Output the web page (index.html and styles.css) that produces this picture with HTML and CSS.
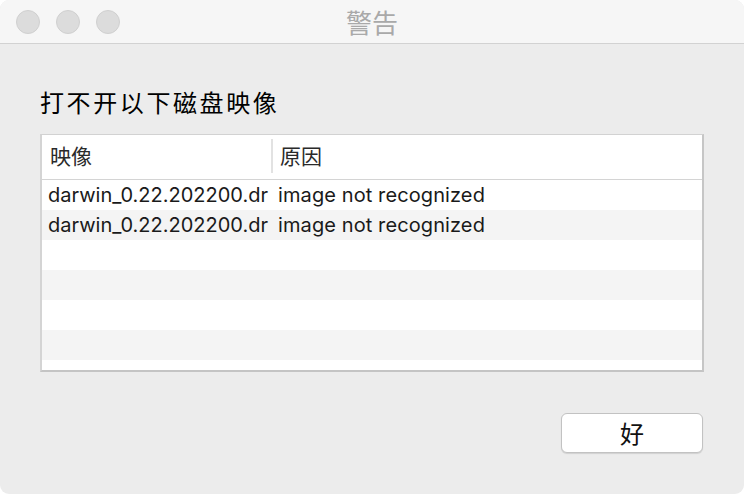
FILE: index.html
```html
<!DOCTYPE html>
<html lang="zh">
<head>
<meta charset="utf-8">
<link rel="stylesheet" href="styles.css">
</head>
<body>
<div class="window">
  <div class="titlebar">
    <div class="lights">
      <span class="light"></span><span class="light"></span><span class="light"></span>
    </div>
    <div class="title">警告</div>
  </div>
  <div class="content">
    <h1 class="heading">打不开以下磁盘映像</h1>
    <div class="table">
      <div class="thead">
        <div class="th col1">映像</div>
        <div class="sep"></div>
        <div class="th col2">原因</div>
      </div>
      <div class="row"><div class="td col1">darwin_0.22.202200.dr</div><div class="td col2">image not recognized</div></div>
      <div class="row alt"><div class="td col1">darwin_0.22.202200.dr</div><div class="td col2">image not recognized</div></div>
      <div class="row"></div>
      <div class="row alt"></div>
      <div class="row"></div>
      <div class="row alt"></div>
      <div class="row short"></div>
    </div>
    <div class="actions">
      <button class="btn">好</button>
    </div>
  </div>
</div>
</body>
</html>
```
FILE: styles.css
```css
html, body {
  margin: 0;
  padding: 0;
  background: #ffffff;
}
body {
  width: 744px;
  height: 494px;
  overflow: hidden;
  font-family: "Inter", "Noto Sans", "Noto Sans CJK SC", sans-serif;
}
.window {
  width: 744px;
  height: 494px;
  background: #ececec;
  border-radius: 9px;
  overflow: hidden;
  display: flex;
  flex-direction: column;
}
.titlebar {
  height: 43px;
  background: #f6f6f6;
  border-bottom: 1px solid #d2d2d2;
  display: flex;
  align-items: center;
  position: relative;
  flex-shrink: 0;
}
.lights {
  display: flex;
  gap: 16px;
  padding-left: 16px;
}
.light {
  width: 22px;
  height: 22px;
  border-radius: 50%;
  background: #dcdcdc;
  border: 1px solid #d0d0d0;
}
.title {
  position: absolute;
  left: 0;
  right: 0;
  top: 0;
  height: 43px;
  line-height: 43px;
  text-align: center;
  font-family: "Noto Sans CJK SC", sans-serif;
  font-size: 26px;
  color: #a9a9a9;
}
.content {
  padding: 0 40px;
  display: flex;
  flex-direction: column;
}
.heading {
  margin: 40px 0 0 0;
  height: 50px;
  font-family: "Noto Sans CJK SC", sans-serif;
  font-weight: 400;
  font-size: 24px;
  letter-spacing: 2.6px;
  line-height: 36px;
  color: #000;
}
.table {
  width: 660px;
  height: 235px;
  background: #fff;
  border-top: 1px solid #d2d2d2;
  border-left: 2px solid #d4d4d4;
  border-right: 2px solid #c6c6c6;
  border-bottom: 2px solid #c4c4c4;
  overflow: hidden;
}
.thead {
  height: 44px;
  border-bottom: 1px solid #d4d4d4;
  display: flex;
  align-items: center;
}
.th {
  font-family: "Noto Sans CJK SC", sans-serif;
  font-size: 21px;
  line-height: 30px;
  color: #2a2a2a;
  margin-top: -5px;
}
.th.col1 {
  width: 221px;
  padding-left: 8px;
}
.sep {
  width: 2px;
  height: 34px;
  margin-top: -2px;
  background: #e2e2e2;
}
.th.col2 {
  padding-left: 7px;
}
.row {
  height: 30px;
  display: flex;
  align-items: center;
}
.row.alt {
  background: #f4f4f4;
}
.row.short {
  height: 10px;
}
.td {
  font-size: 20px;
  line-height: 26px;
  color: #1a1a1a;
  white-space: nowrap;
}
.td.col1 {
  width: 224px;
  padding-left: 6px;
}
.td.col2 {
  padding-left: 6px;
  letter-spacing: 0.1px;
}
.actions {
  display: flex;
  justify-content: flex-end;
  padding-top: 41px;
  padding-right: 1px;
}
.btn {
  width: 142px;
  height: 40px;
  background: #fff;
  border: 1px solid #c2c2c2;
  border-radius: 6px;
  box-shadow: 0 1px 1px rgba(0,0,0,0.12);
  font-family: "Noto Sans CJK SC", sans-serif;
  font-size: 24px;
  color: #111;
  padding: 0;
  line-height: 36px;
}
```
